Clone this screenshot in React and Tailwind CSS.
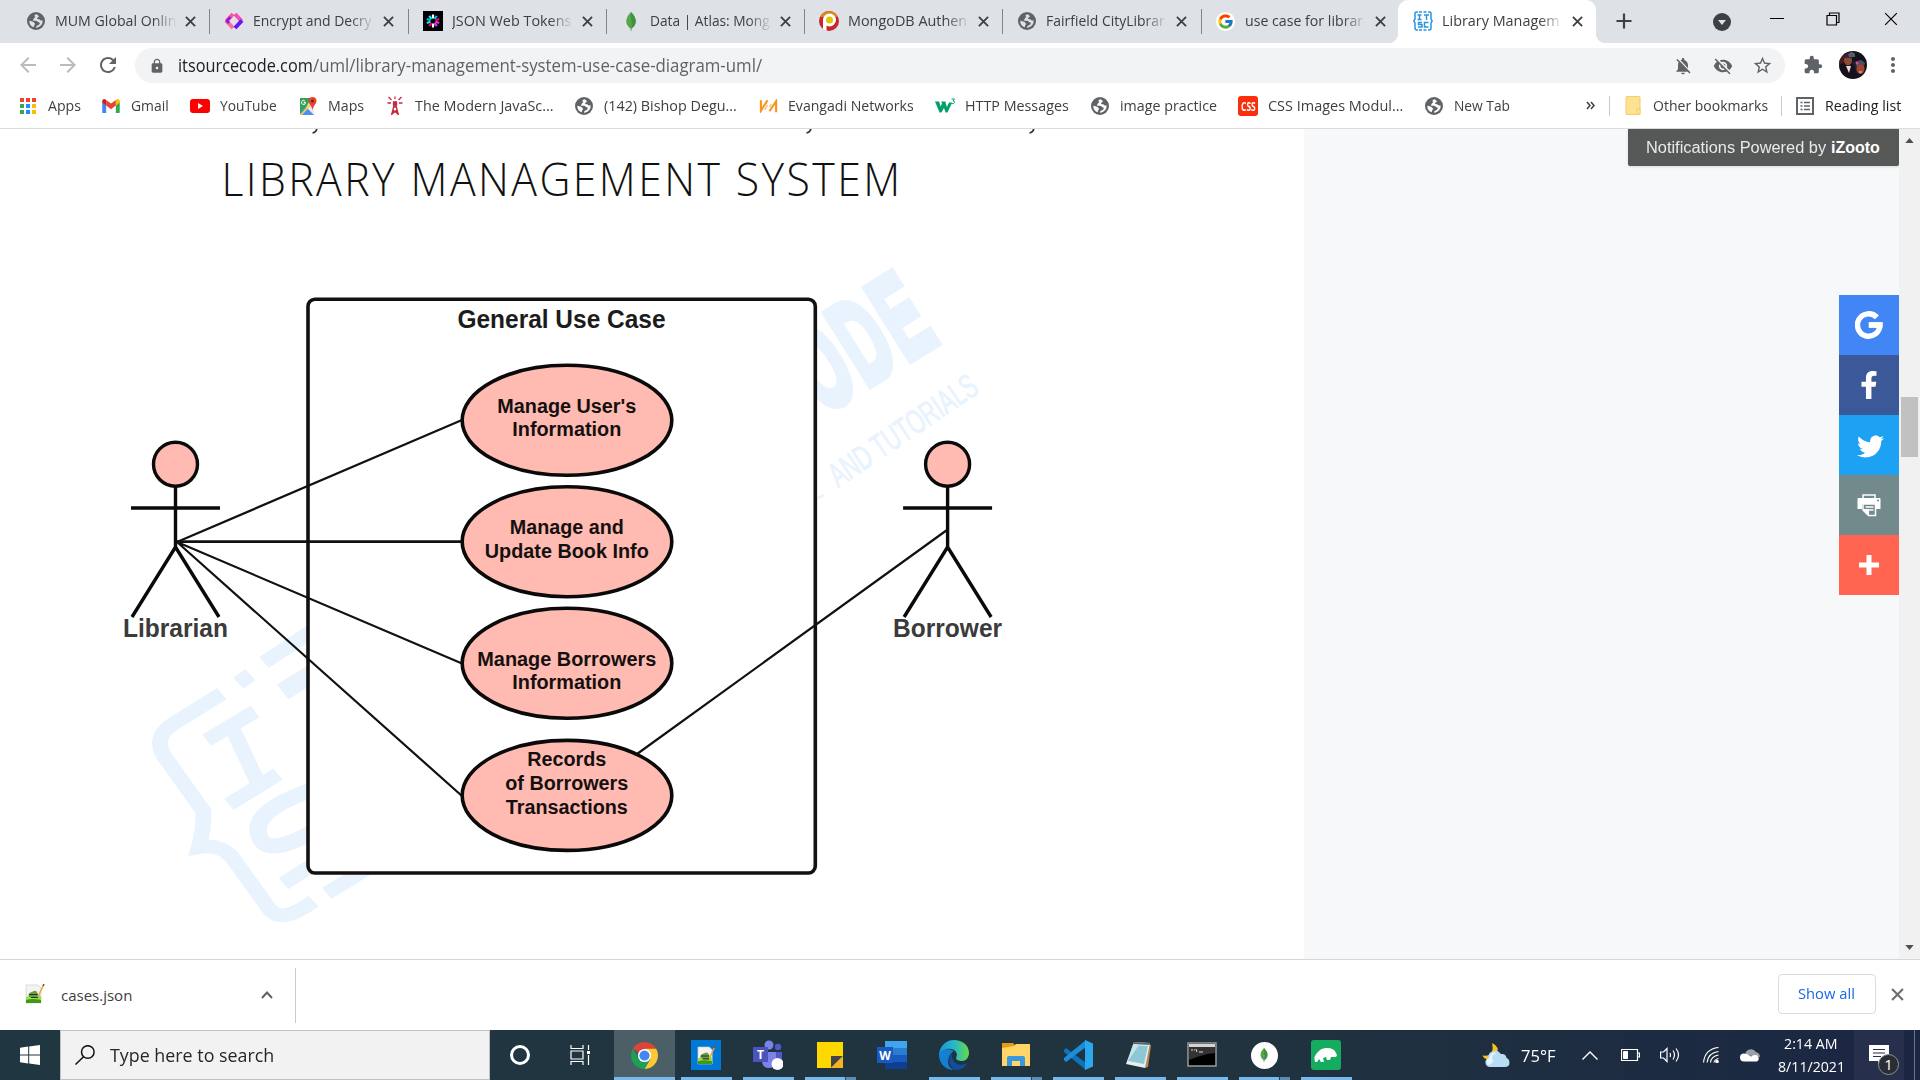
import { useLayoutEffect, useRef } from "react";
import {
  MdArrowBack,
  MdArrowForward,
  MdRefresh,
  MdLock,
  MdNotificationsOff,
  MdVisibilityOff,
  MdStarBorder,
  MdExtension,
  MdMoreVert,
} from "react-icons/md";
import { FaFacebookF, FaTwitter } from "react-icons/fa";
import { FcGoogle } from "react-icons/fc";

/* One line of text, condensed or widened to fill exactly w pixels. */
function Fit({ w, className = "", children }) {
  const ref = useRef(null);
  useLayoutEffect(() => {
    const el = ref.current;
    el.style.transform = "none";
    el.style.transform = `scaleX(${w / el.offsetWidth})`;
  }, [w]);
  return (
    <span className={`block shrink-0 whitespace-nowrap ${className}`} style={{ width: w }}>
      <span ref={ref} className="inline-block origin-left whitespace-pre">
        {children}
      </span>
    </span>
  );
}

const Globe = ({ land = "#fff" }) => (
  <svg viewBox="0 0 18 18" className="size-[18px] shrink-0">
    <circle cx="9" cy="9" r="9" fill="#5f6368" />
    <path
      d="M9.600 2.300C8.300 2.400 7.400 3.200 7.300 4.300c1.500.1 1.200 1.200.2 1.500-1 .4-.4 1.700-1.400 2-.6.200-.2 1 .5 1 1.600-.1 3.700-.2 4.300 1.200.8.500 2.200.3 1.900 1.500-.4 1.700-2.800 1.700-3.800 3.200-.3 1 .5 1.200 1.400.9a6.600 6.600 0 0 0 5.100-7.600c-1.200.9-2.300.7-2.800-.4-.8-.6-2.500.2-2.700-1-.1-1.200 1.900-1 1.800-2.300-.1-.9-1.300-1-2.200-2z"
      fill={land}
    />
    <path d="M2.300 8.800c2 .2 4 .8 5.200 2.300 1.200.9.200 1.900-.4 2.500-.2.800-.1 1.600-.6 1.700a6.700 6.700 0 0 1-4.200-6.500z" fill={land} />
  </svg>
);

const GoogleBadge = () => (
  <span className="flex size-[19px] items-center justify-center rounded-full bg-white">
    <FcGoogle className="size-[17px]" />
  </span>
);

const EncryptIcon = () => (
  <svg viewBox="0 0 20 20" className="size-5" fill="none" strokeWidth="4">
    <path d="M9 3 2.500 10" stroke="#ff4fa3" />
    <path d="M2 9.500 9 17" stroke="#ff6b9d" />
    <path d="M11 3l6.500 7" stroke="#f04fb0" />
    <path d="M18 9.500 11 17" stroke="#6a11ff" />
    <path d="M6.500 6 3 10l2 2" stroke="#8a1be2" strokeWidth="2.600" />
  </svg>
);

const JwtIcon = () => (
  <svg viewBox="0 0 20 20" className="size-5" strokeWidth="2.2">
    <path d="M0 0h20v20H0z" fill="#000" />
    <path d="M10 3.500v4M10 12.500v4" stroke="#fff" />
    <path d="m6.200 4.800 2.300 3.200M3.800 12l3.800-1.200" stroke="#00f2e6" />
    <path d="m13.800 4.800-2.300 3.200M3.800 8l3.800 1.200" stroke="#00b9f1" />
    <path d="m16.200 8-3.800 1.200M6.200 15.200 8.500 12" stroke="#fb015b" />
    <path d="m16.200 12-3.800-1.200M13.800 15.200 11.500 12" stroke="#d63aff" />
  </svg>
);

const Leaf = ({ className = "h-[19px] w-5" }) => (
  <svg viewBox="0 0 20 20" className={className}>
    <path d="M10 0c3 3.500 5 6 5 10 0 3.500-2.500 6-5 8-2.500-2-5-4.500-5-8 0-4 2-6.500 5-10z" fill="#4faa41" />
    <path d="M10 0c3 3.500 5 6 5 10 0 3.500-2.500 6-5 8z" fill="#3f9143" />
    <path d="M10 9v11" stroke="#7b9a6d" />
  </svg>
);

const PIcon = () => (
  <svg viewBox="0 0 20 20" className="size-5">
    <circle cx="10" cy="10" r="10" fill="#c8262b" />
    <path d="M1 6a10 10 0 0 1 18 0" fill="#d98a1f" />
    <circle cx="10.500" cy="9" r="6.500" fill="#fff" />
    <path d="M4 8h3.500v12L4 18z" fill="#fff" />
    <circle cx="10.500" cy="9" r="3.500" fill="#e2c400" />
  </svg>
);

const ItscIcon = () => (
  <svg viewBox="0 0 20 20" className="size-5" fill="none" stroke="#2b93e0" strokeWidth="1.5">
    <path d="M5 1H3.500Q2 1 2 3v5L.8 10 2 12v5q0 2 2 2h1M15 1h1.500Q18 1 18 3v5l1.200 2L18 12v5q0 2-2 2h-1" />
    <path d="M6 1h8M6 19h8" strokeDasharray="3 1.500" />
    <path d="M4.500 4h4M6.500 4v4.500M4.500 8.500h4M11 4h5M13.500 4v5M9 11.500H5.500v2H9v2.500H5M15.500 11.500h-4V16h4" />
  </svg>
);

const Close = ({ className = "size-[11px]", sw = "2" }) => (
  <svg viewBox="0 0 12 12" className={`shrink-0 ${className}`} stroke="currentColor" strokeWidth={sw}>
    <path d="m1 1 10 10M11 1 1 11" />
  </svg>
);

const TABS = [
  { icon: <Globe land="#dee1e6" />, title: "MUM Global Onlin", w: 121 },
  { icon: <EncryptIcon />, title: "Encrypt and Decry", w: 119 },
  { icon: <JwtIcon />, title: "JSON Web Tokens", w: 119 },
  { icon: <Leaf />, title: "Data | Atlas: Mong", w: 120 },
  { icon: <PIcon />, title: "MongoDB Authen", w: 119 },
  { icon: <Globe land="#dee1e6" />, title: "Fairfield CityLibrar", w: 119 },
  { icon: <GoogleBadge />, title: "use case for librar", w: 118 },
  { icon: <ItscIcon />, title: "Library Managem", w: 118 },
];

function Tab({ icon, title, w, active, bar }) {
  return (
    <div
      className={
        active
          ? "relative -ml-[2px] flex h-[43px] w-[198.3px] shrink-0 items-center rounded-t-[10px] bg-white pb-px pl-[15px]"
          : "relative flex h-[43px] w-[198.3px] shrink-0 items-center pb-px pl-[14px]"
      }
    >
      {active && (
        <>
          <span className="absolute bottom-0 -left-[10px] size-[10px] bg-[radial-gradient(circle_at_0_0,#dee1e6_10px,#fff_10.5px)]" />
          <span className="absolute -right-[10px] bottom-0 size-[10px] bg-[radial-gradient(circle_at_100%_0,#dee1e6_10px,#fff_10.5px)]" />
        </>
      )}
      <span className="flex w-5 shrink-0 items-center justify-center">{icon}</span>
      <div className="ml-[9px] h-6 w-[122px] shrink-0 overflow-hidden mask-r-from-80% text-[15px] leading-[22px] text-[#3c4043]">
        <Fit w={w}>{title}</Fit>
      </div>
      <span className="ml-2 text-[#3c4043]">
        <Close />
      </span>
      {bar && <span className="absolute top-[9px] right-0 h-[25px] w-px bg-[#808387]" />}
    </div>
  );
}

function TabStrip() {
  return (
    <div className="flex h-[43px] shrink-0 bg-[#dee1e6] pl-3">
      {TABS.map((t, i) => (
        <Tab key={t.title} {...t} active={i === 7} bar={i < 6} />
      ))}
      <svg viewBox="0 0 16 16" className="mt-[13px] ml-5 size-4" stroke="#3c4043" strokeWidth="2.2">
        <path d="M8 .5v15M.5 8h15" />
      </svg>
      <svg viewBox="0 0 20 20" className="mt-3 ml-[80px] size-5">
        <circle cx="10" cy="10" r="9" fill="#3c4043" />
        <path d="M6 8h8l-4 5z" fill="#dee1e6" />
      </svg>
      <svg viewBox="0 0 14 14" className="mt-3 ml-[38px] size-[14px]" stroke="#000">
        <path d="M0 6.500h14" />
      </svg>
      <svg viewBox="0 0 14 14" className="mt-3 ml-[42px] size-[14px]" stroke="#000" fill="none" strokeWidth="1.2">
        <path d="M1 3.500h9.500V13H1zM3.500 3.500V1H13v9.500h-2.500" />
      </svg>
      <span className="mt-3 ml-11 text-black">
        <Close className="size-[14px]" sw="1" />
      </span>
    </div>
  );
}

function Avatar() {
  return (
    <svg viewBox="0 0 28 28" className="ml-4 size-7 shrink-0 rounded-full">
      <path d="M0 0h28v28H0z" fill="#15101a" />
      <path d="M0 0h9v10L0 14z" fill="#471a20" />
      <ellipse cx="9" cy="9.500" rx="4" ry="5" fill="#8c4a35" />
      <path d="M5 7q4-6 9-3l-1 3z" fill="#2a2d3a" />
      <path d="M9 3q4-4 7 0v3h-6z" fill="#565b6e" />
      <path d="M7 15l3 7 2-7z" fill="#e5dcdc" />
      <path d="M13 11l5 12 2-14z" fill="#1c1f33" />
      <ellipse cx="21.500" cy="17.500" rx="4" ry="5.500" fill="#a0442f" />
      <path d="M17 12q4-6 9 0l-1 3q-4-3-8 0z" fill="#4a4f66" />
      <path d="M17 11l2 2" stroke="#ef4a86" strokeWidth="2" />
      <path d="M20 21h3" stroke="#f0d0c8" />
    </svg>
  );
}

function Toolbar() {
  return (
    <div className="flex h-[45px] shrink-0 items-center bg-white pb-px pl-4">
      <MdArrowBack className="size-6 text-[#babcbe]" />
      <MdArrowForward className="ml-4 size-6 text-[#babcbe]" />
      <MdRefresh className="ml-4 size-6 text-[#5f6368]" />
      <div className="mt-px ml-[15px] flex h-[35px] w-[1650px] items-center rounded-full bg-[#f1f3f4] pl-[14px] text-[17.5px] leading-[26px]">
        <MdLock className="mr-[20px] size-4 shrink-0 text-[#5f6368]" />
        <Fit w={135} className="-mt-px -ml-[7px] text-[#202124]">itsourcecode.com</Fit>
        <Fit w={449} className="-mt-px text-[#5f6368]">/uml/library-management-system-use-case-diagram-uml/</Fit>
        <MdNotificationsOff className="ml-[911px] size-5 shrink-0 text-[#5f6368]" />
        <MdVisibilityOff className="ml-5 size-5 shrink-0 text-[#5f6368]" />
        <MdStarBorder className="ml-[19px] size-[21px] shrink-0 text-[#5f6368]" />
      </div>
      <MdExtension className="ml-[18px] size-5 shrink-0 text-[#5f6368]" />
      <Avatar />
      <MdMoreVert className="ml-[14px] size-6 shrink-0 text-[#5f6368]" />
    </div>
  );
}

const AppsIcon = () => (
  <div className="grid w-4 grid-cols-3 gap-[2px]">
    {["bg-[#ea4335]", "bg-[#ea4335]", "bg-[#ea4335]", "bg-[#34a853]", "bg-[#1a90ff]", "bg-[#fbbc05]", "bg-[#34a853]", "bg-[#1a90ff]", "bg-[#fbbc05]"].map(
      (c, i) => (
        <span key={i} className={`h-1 w-1 ${c}`} />
      )
    )}
  </div>
);

const GmailIcon = () => (
  <svg viewBox="0 0 20 16" className="h-[14px] w-[18px]">
    <path d="M0 3v12q0 1 1 1h3.500V7z" fill="#4285f4" />
    <path d="M20 3v12q0 1-1 1h-3.500V7z" fill="#34a853" />
    <path d="M15.500 1v6.500L20 4V2.500Q20 0 17.500 0z" fill="#fbbc04" />
    <path d="M0 4V2.500Q0 0 2.500 0l2 1v6.500z" fill="#c5221f" />
    <path d="M4.500 7.500V1L10 5.200 15.500 1v6.500L10 11.700z" fill="#ea4335" />
  </svg>
);

const YoutubeIcon = () => (
  <svg viewBox="0 0 20 14" className="h-[14px] w-5">
    <rect width="20" height="14" rx="3" fill="#f00" />
    <path d="M8 4v6l5-3z" fill="#fff" />
  </svg>
);

const MapsIcon = () => (
  <svg viewBox="0 0 20 20" className="size-5">
    <path d="M2 3h14v16H2z" fill="#e8eaed" />
    <path d="M2 2h11l-4 8-7 8z" fill="#34a058" />
    <path d="m2 18 6-7 8 8H3z" fill="#4d8df6" />
    <path d="M2 19 15 4l1 2L4 19z" fill="#fbd04b" />
    <path d="M14.500 1a4 4 0 0 1 4 4c0 3-3 4-4 9-1-5-4-6-4-9a4 4 0 0 1 4-4z" fill="#ea4335" />
    <circle cx="14.500" cy="5" r="1.500" fill="#7c1e16" />
    <path d="M7.500 6.500H5.800M7.500 6.500a2 2 0 1 1-.6-1.500" stroke="#fff" fill="none" />
  </svg>
);

const TowerIcon = () => (
  <svg viewBox="0 0 20 20" className="size-5" stroke="#c5283d" fill="none" strokeWidth="1.3">
    <path d="M10 6 6.500 19M10 6l3.500 13M7 15.500h6M8 11h4M8 14l5 4M12 14l-5 4" />
    <path d="M8.500 6h3v3h-3z" fill="#c5283d" />
    <path d="M6.500 4 3.500 1M6 7H2.500M13.500 4l3-3M14 7h3.500M10 3V.5" />
  </svg>
);

const EvangadiIcon = () => (
  <svg viewBox="0 0 20 14" className="h-[14px] w-[19px]" fill="none" stroke="#f7941d" strokeWidth="2.2">
    <path d="M2 1v11L9 1M11 12.500 18 2v11.500" />
    <path d="m6 11 3-5M11 8l2-3" stroke="#fbc27a" strokeWidth="1.600" />
  </svg>
);

const W3Icon = () => (
  <svg viewBox="0 0 22 16" className="h-4 w-[22px] shrink-0">
    <path d="M1 3.500h4.200l1.300 5L8 5.500l-.8-2h4.200l1.400 5.500L15 4.500h3.200l-4.700 10h-1.900L10 10l-2.500 4.500H5.500z" fill="#04a06c" />
    <path d="M17.500 1h3L19 3q2 .2 1.500 1.700T17.500 5.500" fill="none" stroke="#04a06c" strokeWidth="1" />
  </svg>
);

const CssIcon = () => (
  <span className="flex size-5 items-center justify-center rounded-[3px] bg-[#fb2f0b] text-[13px] font-bold text-white">
    <Fit w={15} className="leading-5">CSS</Fit>
  </span>
);

const BOOKMARKS = [
  { icon: <AppsIcon />, label: "Apps", w: 33, box: "w-[83px]" },
  { icon: <GmailIcon />, label: "Gmail", w: 38, box: "w-[89px]" },
  { icon: <YoutubeIcon />, label: "YouTube", w: 57, box: "w-[108px]" },
  { icon: <MapsIcon />, label: "Maps", w: 36, box: "w-[87px]" },
  { icon: <TowerIcon />, label: "The Modern JavaSc...", w: 139, box: "w-[189px]" },
  { icon: <Globe />, label: "(142) Bishop Degu...", w: 133, box: "w-[184px]" },
  { icon: <EvangadiIcon />, label: "Evangadi Networks", w: 126, box: "w-[177px]" },
  { icon: <W3Icon />, label: "HTTP Messages", w: 104, box: "w-[155px]" },
  { icon: <Globe />, label: "image practice", w: 97, box: "w-[148px]" },
  { icon: <CssIcon />, label: "CSS Images Modul...", w: 135, box: "w-[186px]" },
  { icon: <Globe />, label: "New Tab", w: 56, box: "w-[162px]" },
];

function Bookmarks() {
  return (
    <div className="flex h-[41px] shrink-0 items-center border-b border-[#dadce0] bg-white pb-[5px] pl-[18px] text-[15px] leading-[22px] text-[#3c4043]">
      {BOOKMARKS.map((b) => (
        <div key={b.label} className={`flex shrink-0 items-center ${b.box}`}>
          <span className="mr-[10px] flex w-5 shrink-0 items-center justify-center">{b.icon}</span>
          <Fit w={b.w} className="-mt-[2px]">{b.label}</Fit>
        </div>
      ))}
      <svg viewBox="0 0 9 9" className="-mt-px size-[9px]" fill="none" stroke="#3c4043" strokeWidth="1.5">
        <path d="m1 1 3 3.500L1 8M5 1l3 3.500L5 8" />
      </svg>
      <span className="ml-[14px] h-5 w-px bg-[#c6c8cb]" />
      <svg viewBox="0 0 16 19" className="ml-[15px] h-[19px] w-4">
        <path d="M1 1.500Q1 .5 2 .5h12q1 0 1 1v16q0 1-1 1H2q-1 0-1-1z" fill="#fde293" stroke="#f6cf60" />
        <path d="M12 18.500v-5q0-1 1-1h2v6z" fill="#fde293" stroke="#f6cf60" />
      </svg>
      <Fit w={115} className="-mt-[2px] ml-3">Other bookmarks</Fit>
      <span className="ml-[13px] h-5 w-px bg-[#c6c8cb]" />
      <svg viewBox="0 0 18 18" className="ml-[14px] size-[18px]" fill="none" stroke="#5f6368" strokeWidth="2">
        <path d="M1 1h16v16H1z" />
        <path d="M4.500 5.500h2M8 5.500h6M4.500 9h2M8 9h6M4.500 12.500h2M8 12.500h6" strokeWidth="1.500" />
      </svg>
      <Fit w={76} className="-mt-[2px] ml-[11px] text-[#202124]">Reading list</Fit>
    </div>
  );
}

const ELLIPSES = [
  { cy: 420.3, lines: [["Manage User's", 412.5, 139], ["Information", 436.3, 109]] },
  { cy: 541.7, lines: [["Manage and", 533.5, 114], ["Update Book Info", 557.5, 164]] },
  { cy: 663.2, lines: [["Manage Borrowers", 665.5, 179], ["Information", 689.3, 109]] },
  { cy: 795.4, lines: [["Records", 766.3, 79], ["of Borrowers", 790.2, 123], ["Transactions", 814, 122]] },
];

function Actor({ cx, name, w }) {
  return (
    <g>
      <g stroke="#0a0a0a" strokeWidth="3.4" fill="none" transform={`translate(${cx} 0)`}>
        <circle cx="0" cy="464.2" r="22" fill="#ffbbb1" />
        <path d="M0 486v61M-44.500 508h89M-43.500 617 0 547l43.500 70" />
      </g>
      <text x={cx} y="636.600" textAnchor="middle" fontSize="25" fill="#3b3b3b" textLength={w} lengthAdjust="spacingAndGlyphs">
        {name}
      </text>
    </g>
  );
}

function Diagram() {
  return (
    <svg viewBox="0 129 1304 830" className="block h-[830px] w-[1304px] shrink-0 bg-white font-['Liberation_Sans'] font-bold">
      <defs>
        <clipPath id="left">
          <path d="M100 420h208v453h200v60H100z" />
        </clipPath>
        <clipPath id="right">
          <path d="M817 240h200v300H817z" />
        </clipPath>
      </defs>

      {/* descenders of the paragraph line scrolled under the toolbar */}
      <path d="M317 128q-.6 4.500-4.500 5M811 128q-.6 4.500-4.500 5M1034 128q-.6 4.500-4.500 5" stroke="#333" strokeWidth="1.600" fill="none" />

      {/* site watermark */}
      <g clipPath="url(#left)">
        <g transform="translate(100 421.500) scale(.3954 .3444)" fill="none" stroke="#e9f3fd" strokeWidth="40">
          <path d="M308 790 185 878Q135 915 160 968L262 1132Q262 1190 250 1236 300 1226 332 1262L430 1418Q460 1460 540 1392" />
          <path d="M350 760 380 735M415 700 560 590" />
          <path d="M270 925 392 842M330 880 405 1062M326 1112 450 1024" />
          <path d="M462 785 560 715" strokeWidth="52" />
          <path d="M560 1060Q370 1130 405 1210 430 1270 570 1170" strokeWidth="44" />
          <path d="M464 1342 560 1272M574 1370 680 1295" />
        </g>
      </g>
      <g clipPath="url(#right)" fill="#e9f3fd">
        <g transform="translate(911.700 363.300) rotate(-32) scale(.5 1)">
          <text x="-300" y="-4" fontSize="121" stroke="#e9f3fd" strokeWidth="9" textLength="372" lengthAdjust="spacing">
            CODE
          </text>
        </g>
        <g transform="translate(838 488) rotate(-34)" className="font-normal">
          <text x="0" y="0" fontSize="34" stroke="#e9f3fd" strokeWidth=".8" textLength="172" lengthAdjust="spacingAndGlyphs">
            AND TUTORIALS
          </text>
        </g>
        <path d="M816 499l8-4" stroke="#e9f3fd" strokeWidth="3" />
      </g>

      <g transform="translate(221.500 196.300) scale(.94 1)">
        <text
          x="0"
          y="0"
          fontSize="45.500"
          fill="#111"
          textLength="722"
          className="font-['Open_Sans'] font-light"
        >
          LIBRARY MANAGEMENT SYSTEM
        </text>
      </g>

      <rect x="308" y="299.300" width="507.300" height="573.700" rx="7" fill="none" stroke="#111" strokeWidth="3.600" />
      <text x="561.500" y="328" textAnchor="middle" fontSize="25" fill="#1c1c1c" textLength="208" lengthAdjust="spacingAndGlyphs">
        General Use Case
      </text>

      <g stroke="#111" strokeWidth="2.200">
        <path d="M177 542 462 420M177 542 462 663.500M177 542 462 796M947 530 637 754" />
        <path d="M177 541.700h285" strokeWidth="2.700" />
      </g>

      {ELLIPSES.map((e) => (
        <g key={e.cy}>
          <ellipse cx="567" cy={e.cy} rx="104.800" ry="55" fill="#ffbbb1" stroke="#0a0a0a" strokeWidth="3.600" />
          {e.lines.map(([t, y, w]) => (
            <text key={t} x="566.800" y={y} textAnchor="middle" fontSize="20" fill="#15100f" textLength={w} lengthAdjust="spacingAndGlyphs">
              {t}
            </text>
          ))}
        </g>
      ))}

      <Actor cx={175.5} name="Librarian" w={105} />
      <Actor cx={947.6} name="Borrower" w={109} />
    </svg>
  );
}

function Share() {
  return (
    <div className="mt-[129px] flex w-[60px] flex-col text-white">
      <span className="flex h-[60px] items-center justify-center bg-[#4285f4]">
        <svg viewBox="0 0 28 28" className="size-7" fill="none" stroke="#fff" strokeWidth="5.4">
          <path d="M22.200 6.400A11.200 11.200 0 1 0 25.200 14H14" transform="translate(-.3 0)" />
          <path d="M14 14h13.500" />
        </svg>
      </span>
      <span className="flex h-[60px] items-center justify-center bg-[#3b5998]">
        <FaFacebookF className="h-7 w-[30px]" />
      </span>
      <span className="flex h-[60px] items-center justify-center bg-[#1da1f2]">
        <FaTwitter className="mt-[2px] ml-[2px] size-[27px]" />
      </span>
      <span className="flex h-[60px] items-center justify-center bg-[#738a8d]">
        <svg viewBox="0 0 24 24" className="size-6" fill="none" stroke="#fff">
          <path d="M6 5V2h12v3" strokeWidth="1.500" />
          <path d="M.5 6Q.5 5 1.500 5h21q1 0 1 1v10H19v-5H5v5H.500z" fill="#fff" stroke="none" />
          <path d="M6 11h12.500V22.500h-7L6 17z" strokeWidth="1.500" fill="#738a8d" />
          <path d="M8.500 14h8M8.500 17h8" strokeWidth="1.400" />
          <path d="M6 16.500h5.500V22z" fill="#fff" />
          <path d="M20 7.500h2" stroke="#738a8d" strokeWidth="1.500" />
        </svg>
      </span>
      <span className="flex h-[60px] items-center justify-center bg-[#ff6550]">
        <svg viewBox="0 0 20 20" className="size-5" stroke="#fff" strokeWidth="5">
          <path d="M10 0v20M0 10h20" />
        </svg>
      </span>
    </div>
  );
}

function Page() {
  return (
    <div className="flex h-[830px] shrink-0">
      <Diagram />
      <div className="flex w-[595px] flex-col items-end bg-[#f7f8fa]">
        <div className="flex h-[37px] w-[271px] items-center rounded-b-xs bg-[#565857] pl-[18px] font-['Liberation_Sans'] text-base text-[#e9e9e9] shadow">
          <Fit w={180}>Notifications Powered by</Fit>
          <Fit w={49} className="ml-[5px] font-bold text-white">iZooto</Fit>
        </div>
        <Share />
      </div>
      <div className="flex w-[21px] flex-col items-center bg-[#f1f1f1]">
        <svg viewBox="0 0 10 6" className="mt-[9px] h-[5px] w-[9px]">
          <path d="m0 6 5-6 5 6z" fill="#505050" />
        </svg>
        <div className="mt-[254px] h-[60px] w-[17px] bg-[#c1c1c1]" />
        <svg viewBox="0 0 10 6" className="mt-[488px] h-[5px] w-[9px]">
          <path d="m0 0 5 6 5-6z" fill="#505050" />
        </svg>
      </div>
    </div>
  );
}

const NotePadPP = ({ className = "size-5" }) => (
  <svg viewBox="0 0 20 20" className={className}>
    <path d="M1 1h12l3 3v15H1z" fill="#f2f4f2" stroke="#c5ccc5" strokeWidth=".6" />
    <path d="M1 13q7-3 15-1v7H1z" fill="#9be03a" />
    <path d="M1 16q7-2 15 0v3H1z" fill="#3e9a1c" />
    <path d="M3.500 11q1-3 3.500-3 4-3 5.500 1 2 3-1 4H4z" fill="#6f9a4e" />
    <path d="M4 10.500h8.500M6 13.500h7" stroke="#23391b" strokeWidth="1.200" />
    <path d="m13 13 5.500-12" stroke="#e6a63a" strokeWidth="1.500" />
    <path d="m18 2 1-2" stroke="#a33" strokeWidth="1.500" />
  </svg>
);

function Downloads() {
  return (
    <div className="flex h-[71px] shrink-0 items-center border-t border-[#d5d7da] bg-white pl-[25px] text-[15px] leading-6 text-[#3c4043]">
      <NotePadPP className="-mt-[3px] size-5" />
      <Fit w={71} className="ml-4">cases.json</Fit>
      <svg viewBox="0 0 12 8" className="-mt-px ml-[129px] h-2 w-3" fill="none" stroke="#5f6368" strokeWidth="2">
        <path d="m1 7 5-5.500L11 7" />
      </svg>
      <span className="ml-[22px] h-[55px] w-px bg-[#c9cbce]" />
      <div className="-mt-[2px] ml-[1482px] flex h-10 w-[98px] items-center justify-center rounded border border-[#dadce0] text-[#1a66e8]">
        <Fit w={57} className="-mt-[2px] -ml-px">Show all</Fit>
      </div>
      <span className="-mt-[2px] ml-[15px] text-[#6b6f73]">
        <Close className="size-[13px]" sw="2" />
      </span>
    </div>
  );
}

const ChromeIcon = () => (
  <svg viewBox="0 0 30 30" className="size-[29px]">
    <path d="M15 15 2.900 8A14 14 0 0 1 27.100 8H15z" fill="#db4437" />
    <path d="M15 8h12.100A14 14 0 0 1 15 29l6-10.500z" fill="#fcc934" />
    <path d="M2.900 8A14 14 0 0 0 15 29l6-10.500-12 0z" fill="#1e9f54" />
    <circle cx="15" cy="15" r="6.800" fill="#fff" />
    <circle cx="15" cy="15" r="5.300" fill="#4285f4" />
  </svg>
);

const NppTile = () => (
  <span className="flex size-[30px] items-center justify-center bg-[#0078d7]">
    <NotePadPP className="size-[19px]" />
  </span>
);

const TeamsIcon = () => (
  <svg viewBox="0 0 30 30" className="size-[30px]">
    <circle cx="16" cy="5" r="4.500" fill="#7b83eb" />
    <circle cx="25" cy="7" r="3.200" fill="#5059c9" />
    <path d="M20 12h9v9q0 5-5 5h-4z" fill="#5059c9" />
    <path d="M9 12h14v10q-1 6-7 6t-7-6z" fill="#7b83eb" />
    <path d="M0 7h15v15H0z" fill="#4b53bc" />
    <text x="7.500" y="19" textAnchor="middle" fontSize="12" fill="#fff" className="font-['Open_Sans'] font-bold">T</text>
    <circle cx="24.500" cy="24" r="6" fill="#fff" />
  </svg>
);

const StickyIcon = () => (
  <svg viewBox="0 0 30 30" className="size-[30px]">
    <path d="M2 2h26v14L18 28H2z" fill="#ffd800" />
    <path d="M16 16h12L16 28z" fill="#454545" />
    <path d="M28 16v12H16z" fill="#f5b324" />
  </svg>
);

const WordIcon = () => (
  <svg viewBox="0 0 30 30" className="size-[30px]">
    <path d="M8 1h22v7H8z" fill="#41a5ee" />
    <path d="M8 8h22v7H8z" fill="#2b7cd3" />
    <path d="M8 15h22v7H8z" fill="#185abd" />
    <path d="M8 22h22v7H8z" fill="#103f91" />
    <path d="M0 7h16v16H0z" fill="#185abd" />
    <text x="8" y="19.500" textAnchor="middle" fontSize="12" fill="#fff" className="font-['Open_Sans'] font-bold">W</text>
  </svg>
);

const EdgeIcon = () => (
  <svg viewBox="0 0 30 30" className="size-[30px]">
    <defs>
      <linearGradient id="eg" x1="0" x2="1">
        <stop offset="0" stopColor="#1a94dc" />
        <stop offset=".5" stopColor="#27b6c9" />
        <stop offset="1" stopColor="#66dc48" />
      </linearGradient>
    </defs>
    <path d="M15 0C6 0 0 7 0 16c3-7 10-9 15-6 4 3 3 6 2 8 0 2 3 3 6 3 5 0 7-5 7-8C30 5 23 0 15 0z" fill="url(#eg)" />
    <path d="M0 15c0 8 6 15 15 15-6-2-7-8-5-13 1-3 3-5 5-6C8 7 1 10 0 15z" fill="#1580cf" />
    <path d="M13 13c-5 5-3 15 4 17 5 0 9-3 11-6 0-1-1-1-2 0-8 3-15-4-13-11z" fill="#0f4f9e" />
  </svg>
);

const FolderIcon = () => (
  <svg viewBox="0 0 30 30" className="size-[30px]">
    <path d="M1 3h11l3 3v4H1z" fill="#e59b12" />
    <path d="M1 8 13 6l2-2h14v22H1z" fill="#ffd566" />
    <path d="M6 26v-8q0-2 2-2h14q2 0 2 2v8h-5v-5h-8v5z" fill="#3a96dd" />
  </svg>
);

const VscodeIcon = () => (
  <svg viewBox="0 0 30 30" className="size-[30px]">
    <path d="M1 10 3 8l20 15v7L1 12z" fill="#0b74bd" />
    <path d="M1 20l2 2L23 7V0L1 18z" fill="#1b8ddb" />
    <path d="M22 0l8 3.500v23L22 30z" fill="#29a8f0" />
  </svg>
);

const NotepadIcon = () => (
  <svg viewBox="0 0 30 30" className="size-[30px]">
    <path d="M9 3l17 2-3 22-3 1z" fill="#b98a4f" />
    <path d="M9 2l16 1-5 25L1 24z" fill="#e4f1f4" />
    <path d="M8 5l15 1-4 18L3 21z" fill="#8fc8d4" />
    <path d="M3 21l11-16h-6z" fill="#c7e6ec" />
    <path d="M9 2l16 1-.5 2L8 4z" fill="#59666b" />
  </svg>
);

const CmdIcon = () => (
  <svg viewBox="0 0 30 30" className="size-[30px]">
    <path d="M1 3h28v23H1z" fill="#000" stroke="#9b9b9b" strokeWidth="1.500" />
    <path d="M2 4h26v3H2z" fill="#d5d5d5" />
    <path d="M2 7h26v6Q16 14 2 20z" fill="#333" />
    <path d="M4 10h2M7 10h1M9 9l1 3M12 12h4" stroke="#ddd" />
  </svg>
);

const MongoIcon = () => (
  <span className="flex size-[27px] items-center justify-center rounded-full bg-white">
    <Leaf className="h-4 w-[14px]" />
  </span>
);

const BearIcon = () => (
  <svg viewBox="0 0 30 30" className="size-[30px]">
    <rect width="30" height="30" rx="3" fill="#16ac60" />
    <path d="M4 22Q2 16 7 12q3-4 9-4 7 0 9 5l1 2-1 2h-5l-1 3h-3l-1-3-3 1 1 4h-3l-2-3-2 3z" fill="#fff" />
  </svg>
);

const APPS = [
  { icon: <NppTile />, on: true },
  { icon: <TeamsIcon />, on: true },
  { icon: <StickyIcon />, on: true, more: true },
  { icon: <WordIcon /> },
  { icon: <EdgeIcon />, on: true },
  { icon: <FolderIcon />, on: true, more: true },
  { icon: <VscodeIcon />, on: true },
  { icon: <NotepadIcon />, on: true },
  { icon: <CmdIcon />, on: true },
  { icon: <MongoIcon />, on: true, more: true },
  { icon: <BearIcon />, on: true },
];

function Tray() {
  return (
    <div className="ml-auto flex h-full items-center text-white">
      <svg viewBox="0 0 28 26" className="h-[25px] w-7">
        <path d="M10 0q8 4 5 11t-10 6Q1 16 0 13q8 1 10-4 1-4 0-9z" fill="#fcc419" />
        <path d="M7 25a5 5 0 0 1-1-9.500A7 7 0 0 1 19 11.500q5-1 6 4 3 1 3 5 0 4.500-5 4.500z" fill="#b9dcf5" />
        <path d="M7 23a4 4 0 0 1 0-7.500Q9 9 14 10.500q-6 3-3 9z" fill="#e8f4fd" />
      </svg>
      <Fit w={35} className="mt-[2px] ml-[11px] text-[17px]">75°F</Fit>
      <svg viewBox="0 0 16 9" className="ml-[26px] h-[9px] w-4" fill="none" stroke="#fff" strokeWidth="1.400">
        <path d="m.5 8.500 7.500-7.500 7.500 7.500" />
      </svg>
      <svg viewBox="0 0 19 12" className="ml-[23px] h-3 w-[19px]" fill="none" stroke="#fff">
        <path d="M.500.500h16v11H.500zM17 4h1.500v4H17" strokeWidth="1.200" />
        <path d="M2.500 2.500h4v7h-4z" fill="#fff" />
      </svg>
      <svg viewBox="0 0 21 18" className="ml-5 h-[18px] w-[21px]" fill="none" stroke="#fff" strokeWidth="1.200">
        <path d="M.6 6h3L7 2.500v13L3.600 12h-3z" />
        <path d="M10 7q1 2 0 4M13 4.500q3 4.500 0 9M16 2.500q5 6.500 0 13" />
      </svg>
      <svg viewBox="0 0 16 16" className="ml-[22px] size-4" fill="none" stroke="#fff" strokeWidth="1.100">
        <path d="M.5 15.500Q2 2 15.500.5M4 15.500Q5 6 15.500 4.500M7.500 15.500Q8 9.500 15.500 8M11 15.500q.5-3 4.500-4" />
        <circle cx="14" cy="14.500" r="1.200" fill="#fff" />
      </svg>
      <svg viewBox="0 0 20 14" className="ml-[21px] h-[14px] w-5">
        <path d="M5 7a6 6 0 0 1 11-3q4 1 4 5z" fill="#9aa0a8" />
        <path d="M4 13.500a4 4 0 0 1 0-8q3 0 7 3 2-2 5-1.500a3.500 3.500 0 0 1 1 6.500z" fill="#fff" />
      </svg>
      <div className="ml-4 flex w-[70px] flex-col items-center text-[15px] leading-[23px]">
        <Fit w={54}>2:14 AM</Fit>
        <Fit w={67}>8/11/2021</Fit>
      </div>
      <div className="ml-[8px] flex h-full w-[50px] items-center justify-center bg-[#262f4b]">
        <div className="relative h-5 w-5">
          <svg viewBox="0 0 20 20" className="size-5">
            <path d="M0 0h20v16h-8l-3 4v-4H0z" fill="#fff" />
            <path d="M4 4.500h12M4 8h12M4 11.500h8" stroke="#262f4b" strokeWidth="1.200" />
          </svg>
          <span className="absolute top-[9px] left-[9px] flex size-[21px] items-center justify-center rounded-full border border-[#8c919a] bg-[#2a2d33] text-[15px]">
            1
          </span>
        </div>
      </div>
      <span className="mr-[5px] ml-[10px] h-full w-px bg-[#6b7386]" />
    </div>
  );
}

function Taskbar() {
  return (
    <div className="flex h-[50px] shrink-0 items-center bg-linear-to-r from-[#203741] via-[#20333f] via-65% to-[#1b2643]">
      <div className="flex w-[60px] justify-center">
        <svg viewBox="0 0 20 20" className="size-5" fill="#fff">
          <path d="M0 2.800 8.200 1.600v7.900H0zM9.200 1.400 20 0v9.500H9.200zM0 10.500h8.200v7.900L0 17.200zM9.200 10.500H20V20L9.200 18.600z" />
        </svg>
      </div>
      <div className="flex h-full w-[430px] items-center border border-[#bfc1c2] bg-[#f2f2f2] pl-[14px] text-[18.5px] text-[#262626]">
        <svg viewBox="0 0 20 20" className="size-5" fill="none" stroke="#111" strokeWidth="1.500">
          <circle cx="12.800" cy="7" r="6.300" />
          <path d="M8.500 11.800.5 19.500" />
        </svg>
        <Fit w={164} className="ml-[15px]">Type here to search</Fit>
      </div>
      <div className="flex w-[60px] justify-center">
        <span className="size-5 rounded-full border-[3px] border-white" />
      </div>
      <div className="flex w-[64px] justify-center pr-[4px]">
        <svg viewBox="0 0 21 20" className="h-5 w-[21px]" fill="none" stroke="#fff" strokeWidth="1.200">
          <path d="M1 0v3.500h12V0M1 20v-3.500h12V20M1 6h12v8H1zM18.500 0v5M18.500 10v10" />
          <path d="M17 6h3v3h-3z" fill="#fff" stroke="none" />
        </svg>
      </div>
      <div className="flex h-full w-[61px] items-center justify-center border-b-[3px] border-[#76b9ed] bg-[#4c5f67] pt-[3px]">
        <ChromeIcon />
      </div>
      {APPS.map((a, i) => (
        <div key={i} className="flex h-full w-[62px] flex-col items-center">
          <span className="flex h-[47px] items-center pt-[3px]">{a.icon}</span>
          {a.on && (
            <span className="flex h-[3px] w-[51px] bg-[#76b9ed]">
              {a.more && <span className="ml-auto h-[3px] w-[11px] border-l border-[#2b4350] bg-[#5b8cb3]" />}
            </span>
          )}
        </div>
      ))}
      <Tray />
    </div>
  );
}

export default function App() {
  return (
    <div className="flex h-[1080px] w-[1920px] flex-col overflow-hidden bg-white font-['Open_Sans',sans-serif]">
      <TabStrip />
      <Toolbar />
      <Bookmarks />
      <Page />
      <Downloads />
      <Taskbar />
    </div>
  );
}
